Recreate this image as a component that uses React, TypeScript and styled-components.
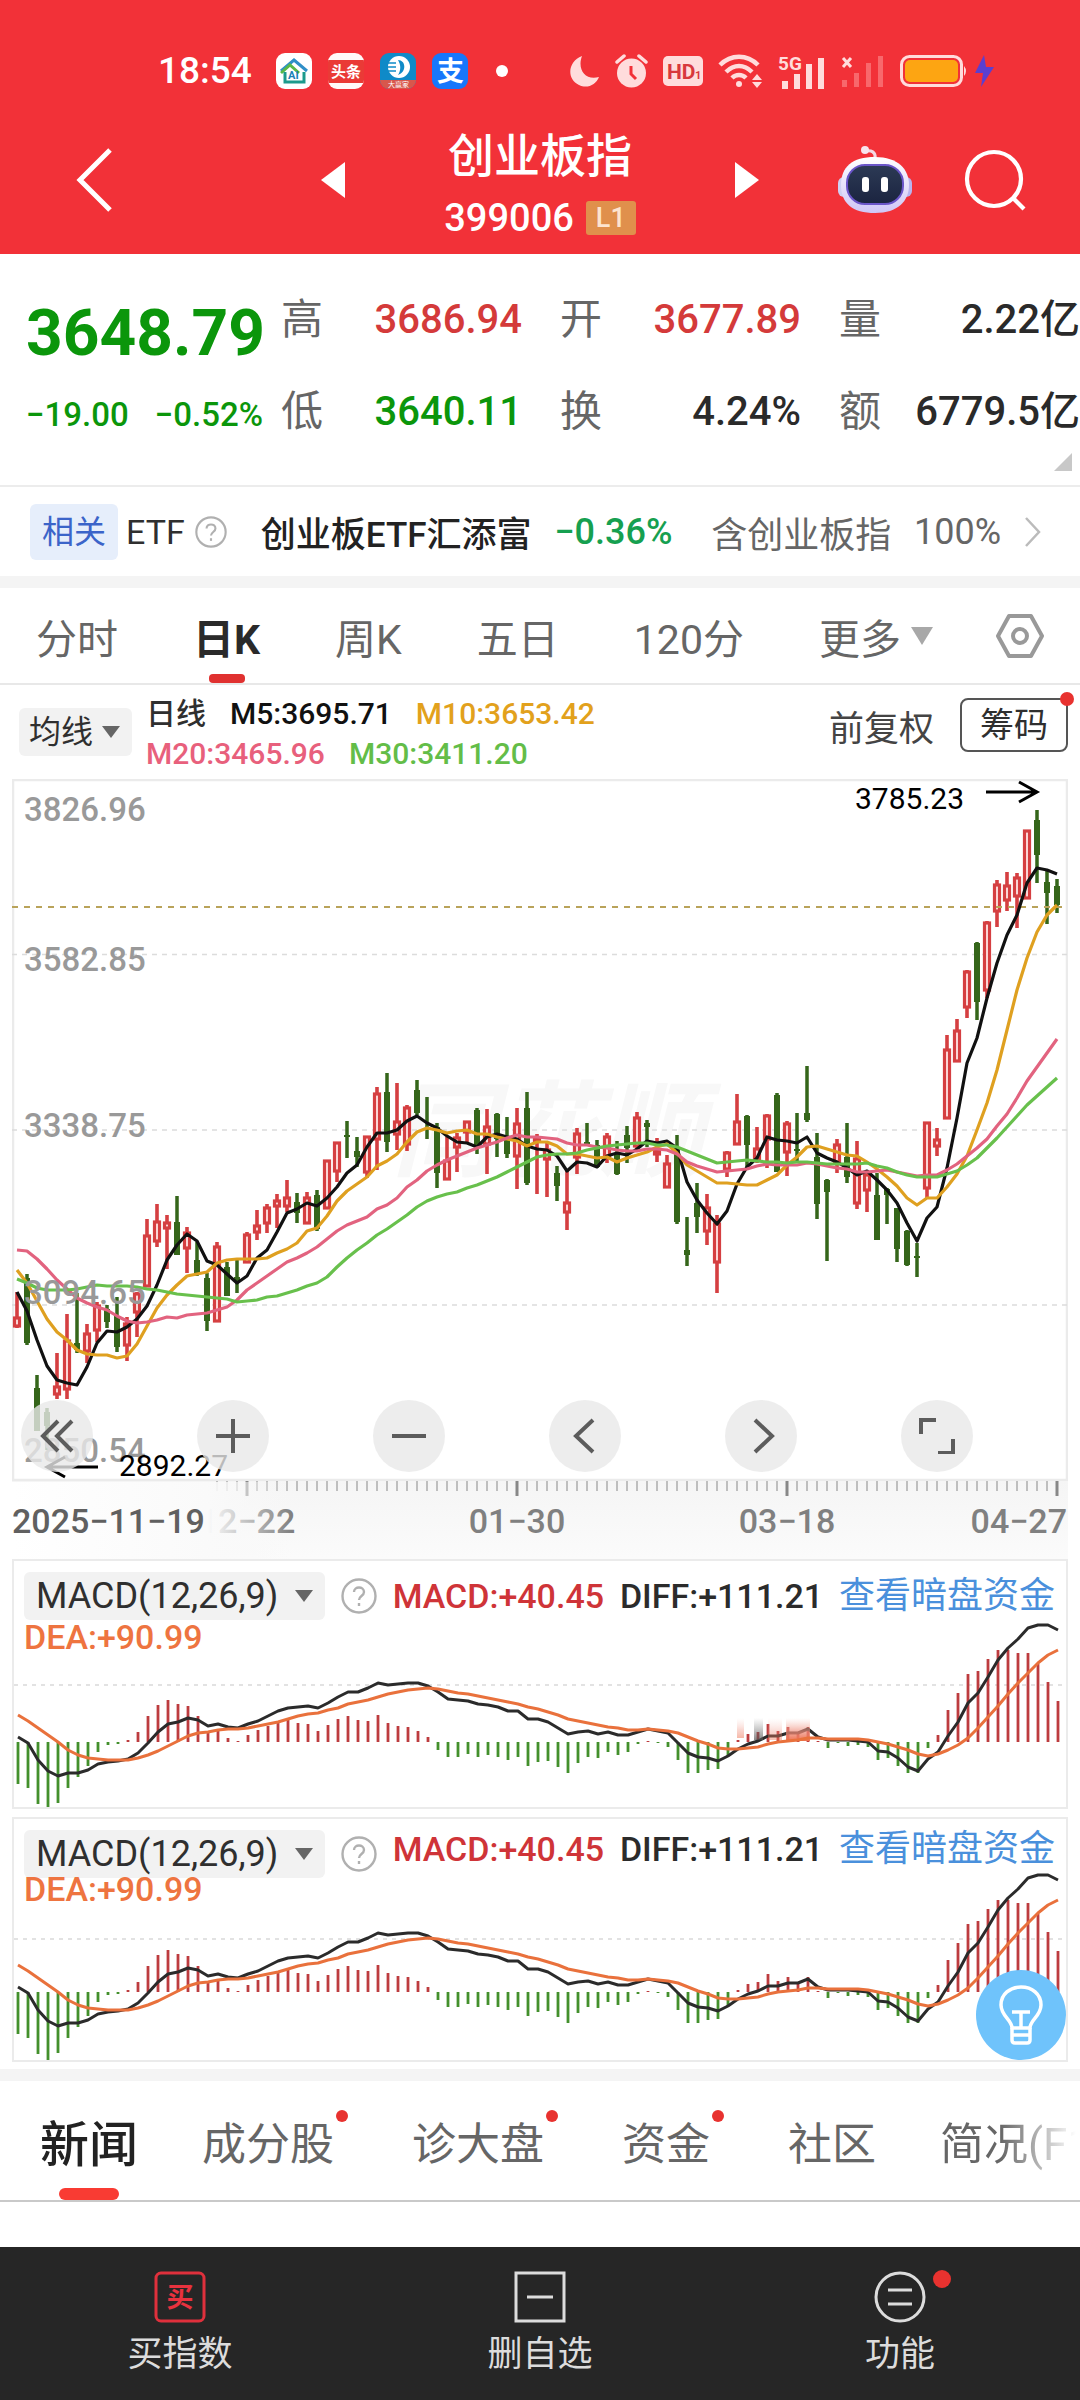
import React from "react";
import styled, { createGlobalStyle, css } from "styled-components";

const GlobalStyle = createGlobalStyle`
  *, *::before, *::after { box-sizing: border-box; }
  body { margin: 0; background: #fff; }
  body, button, select { font-family: Roboto, "Noto Sans CJK SC", sans-serif; }
  h1, dl, dd, dt, p { margin: 0; font-weight: inherit; }
  button, select { border: 0; padding: 0; background: none; color: inherit; font-size: inherit; }
  a { color: inherit; text-decoration: none; }
  svg { display: block; flex: none; }
`;

const red = "#d43a3a";
const green = "#0b960b";

/* ---------- top area ---------- */

const Page = styled.div`
  overflow-x: hidden;
  background: #fff;
  color: #2f2f2f;
`;

const TopArea = styled.header`
  background: #f23138;
  color: #fff;
`;

const StatusBar = styled.div`
  display: flex;
  align-items: center;
  justify-content: space-between;
  padding: 48px 86px 0 158px;
  height: 94px;
`;

const StatusGroup = styled.div<{ $gap: number }>`
  display: flex;
  align-items: center;
  gap: ${(p) => p.$gap}px;
`;

const Clock = styled.span`
  font-size: 37px;
  font-weight: 500;
  line-height: 46px;
  margin-right: 8px;
`;

const NavBar = styled.nav`
  display: grid;
  grid-template-columns: 1fr auto 1fr;
  align-items: center;
  height: 160px;
  padding: 12px 54px 0 76px;
`;

const IconButton = styled.button`
  display: flex;
  align-items: center;
  justify-content: center;
  cursor: pointer;
`;

const NavStart = styled.div`
  display: flex;
  margin-right: 22px;
`;

const NavCenter = styled.div`
  display: flex;
  align-items: center;
  justify-content: space-between;
  width: 438px;
  margin-left: -22px;
`;

const NavEnd = styled.div`
  display: flex;
  justify-content: flex-end;
  gap: 52px;
`;

const TitleBlock = styled.div`
  display: flex;
  flex-direction: column;
  align-items: center;
  gap: 12px;
  padding-top: 4px;
`;

const Title = styled.h1`
  font-size: 46px;
  line-height: 60px;
  font-weight: 500;
`;

const CodeLine = styled.div`
  display: flex;
  align-items: center;
  gap: 12px;
  font-size: 38px;
  font-weight: 500;
  line-height: 40px;
`;

const LevelTag = styled.span`
  padding: 0 10px;
  border-radius: 3px;
  background: #e0904c;
  color: #fde4cf;
  font-size: 27px;
  line-height: 34px;
`;

/* ---------- quote ---------- */

const Quote = styled.section`
  position: relative;
  display: grid;
  grid-template-columns: 255px 1fr;
  height: 231px;
  padding: 20px 0 0 26px;
`;

const PriceColumn = styled.div`
  color: ${green};
`;

const Price = styled.p`
  font-size: 64px;
  line-height: 92px;
  padding-top: 14px;
  font-weight: 700;
`;

const Change = styled.p`
  display: flex;
  gap: 26px;
  font-size: 33px;
  font-weight: 500;
  line-height: 70px;
  white-space: nowrap;
`;

const Stats = styled.dl`
  display: grid;
  grid-template-columns: repeat(3, 1fr);
  grid-template-rows: 92px 92px;
  column-gap: 38px;
`;

const Stat = styled.div`
  display: flex;
  justify-content: space-between;
  align-items: center;
  white-space: nowrap;
`;

const StatLabel = styled.dt`
  font-size: 42px;
  line-height: 60px;
  color: #666;
`;

const StatValue = styled.dd<{ $color: string }>`
  font-size: 40px;
  line-height: 60px;
  font-weight: 500;
  color: ${(p) => p.$color};
`;

const ExpandCorner = styled.svg`
  position: absolute;
  right: 8px;
  bottom: 14px;
`;

const EtfRow = styled.section`
  display: flex;
  align-items: center;
  height: 91px;
  padding: 0 38px 0 30px;
  border-top: 2px solid #ececec;
  font-size: 36px;
  white-space: nowrap;
`;

const EtfTag = styled.span`
  padding: 0 12px;
  margin-right: 8px;
  border-radius: 6px;
  background: #e6eefb;
  color: #3b64c9;
  font-size: 32px;
  line-height: 56px;
`;

const EtfWord = styled.span`
  margin-right: 10px;
  font-size: 34px;
`;

const EtfLink = styled.a`
  display: flex;
  flex: 1;
  align-items: center;
  justify-content: space-between;
  margin-left: 34px;
  color: #666;
`;

const EtfName = styled.span`
  color: #222;
  font-size: 35px;
  font-weight: 500;
`;

const EtfChange = styled.span`
  margin-right: 16px;
  color: #16a050;
  font-weight: 500;
`;

const Band = styled.div`
  height: 12px;
  background: #f4f4f4;
`;

/* ---------- period tabs ---------- */

const PeriodTabs = styled.nav`
  display: flex;
  justify-content: space-between;
  height: 97px;
  padding: 0 36px;
  border-bottom: 2px solid #e8e8e8;
`;

const PeriodTab = styled.button<{ $active?: boolean }>`
  position: relative;
  display: flex;
  align-items: center;
  gap: 10px;
  font-size: 41px;
  color: ${(p) => (p.$active ? "#2a2a2a" : "#666")};
  font-weight: ${(p) => (p.$active ? 700 : 400)};
  ${(p) => p.$active && css`
    &::after {
      content: "";
      position: absolute;
      left: 50%;
      bottom: 0;
      width: 36px;
      height: 9px;
      margin-left: -18px;
      border-radius: 4px;
      background: #e03130;
    }
  `}
`;

const SettingsButton = styled(IconButton)`
  margin-left: -12px;
`;

/* ---------- moving averages ---------- */

const AverageRow = styled.section`
  display: flex;
  align-items: center;
  height: 94px;
  padding: 0 12px 0 19px;
`;

const SelectBox = styled.label<{ $size: number }>`
  display: grid;
  align-items: center;
  border-radius: 6px;
  background: #f2f2f2;
  color: #2f2f2f;
  font-size: ${(p) => p.$size}px;
  > * { grid-area: 1 / 1; }
  > svg { justify-self: end; margin-right: 12px; pointer-events: none; }
`;

const Select = styled.select<{ $wide?: boolean }>`
  appearance: none;
  height: 48px;
  padding: ${(p) => (p.$wide ? "0 46px 0 12px" : "0 38px 0 10px")};
  line-height: 48px;
`;

const AverageLegend = styled.div`
  display: flex;
  flex-direction: column;
  flex: 1;
  margin-left: 14px;
  padding-top: 4px;
  font-size: 30px;
  font-weight: 500;
  line-height: 40px;
`;

const LegendLine = styled.div`
  display: flex;
  gap: 24px;
`;

const Tint = styled.span<{ $color: string }>`
  color: ${(p) => p.$color};
`;

const PlainButton = styled.button`
  margin-bottom: 14px;
  font-size: 35px;
  color: #444;
`;

const ChipButton = styled.button`
  position: relative;
  height: 54px;
  margin: 0 0 14px 26px;
  padding: 0 18px;
  border: 2px solid #555;
  border-radius: 8px;
  font-size: 34px;
  line-height: 48px;
`;

const Dot = styled.i<{ $size: number; $top: number; $right: number }>`
  position: absolute;
  top: ${(p) => p.$top}px;
  right: ${(p) => p.$right}px;
  width: ${(p) => p.$size}px;
  height: ${(p) => p.$size}px;
  border-radius: 50%;
  background: #e8322f;
`;

/* ---------- charts ---------- */

const Charts = styled.main`
  padding: 0 12px 7px;
`;

const KlineBox = styled.section`
  position: relative;
`;

const Drawing = styled.svg`
  width: 100%;
  height: auto;
`;

const ChartTools = styled.div`
  position: absolute;
  left: 9px;
  right: -9px;
  bottom: 87px;
  display: grid;
  grid-template-columns: repeat(6, 1fr);
`;

const ToolButton = styled(IconButton)`
  width: 72px;
  height: 72px;
  border-radius: 50%;
  background: rgba(232, 232, 232, 0.8);
`;

const MacdPanel = styled.section`
  position: relative;
  display: grid;
  border: 2px solid #ebebeb;
  > * { grid-area: 1 / 1; }
  & + & { margin-top: 8px; }
`;

const MacdHead = styled.div<{ $compact?: boolean }>`
  z-index: 1;
  align-self: start;
  padding: 10px 11px 0 10px;
  font-size: 35px;
  line-height: 40px;
  > div:first-child > :nth-child(n + 3) {
    margin-bottom: ${(p) => (p.$compact ? 10 : 0)}px;
  }
  > div:last-child { margin-top: ${(p) => (p.$compact ? -10 : -4)}px; }
`;

const MacdLine = styled.div`
  display: flex;
  align-items: center;
  justify-content: space-between;
  height: 50px;
  white-space: nowrap;
`;

const Reading = styled(Tint)`
  font-size: 34px;
  font-weight: 500;
`;

const DarkPoolLink = styled.a`
  color: #4a90dc;
  font-size: 36px;
`;

const TipButton = styled(IconButton)`
  position: absolute;
  z-index: 2;
  right: 0;
  bottom: 0;
  width: 90px;
  height: 90px;
  border-radius: 50%;
  background: #6fc3fb;
`;

/* ---------- lower tabs and bottom bar ---------- */

const NewsTabs = styled.nav`
  display: flex;
  gap: 64px;
  height: 121px;
  padding-left: 40px;
  border-bottom: 2px solid #c9c9c9;
  white-space: nowrap;
  overflow: hidden;
`;

const NewsTab = styled.button<{ $active?: boolean; $dot?: boolean; $fade?: boolean }>`
  position: relative;
  flex: none;
  font-size: ${(p) => (p.$active ? 49 : 44)}px;
  font-weight: ${(p) => (p.$active ? 500 : 400)};
  color: ${(p) => (p.$active ? "#222" : "#666")};
  padding-right: ${(p) => (p.$dot ? 14 : 0)}px;
  ${(p) => p.$fade && css`
    background: linear-gradient(90deg, #666 60px, #fff 136px);
    background-clip: text;
    color: transparent;
  `}
  ${(p) => p.$active && css`
    &::after {
      content: "";
      position: absolute;
      left: 50%;
      bottom: 0;
      width: 60px;
      height: 12px;
      margin-left: -30px;
      border-radius: 6px;
      background: #f93b33;
    }
  `}
`;

const BottomBar = styled.nav`
  display: grid;
  grid-template-columns: repeat(3, 1fr);
  margin-top: 45px;
  height: 154px;
  background: #262626;
  color: #dcdcdc;
`;

const BottomItem = styled.button`
  display: flex;
  flex-direction: column;
  align-items: center;
  padding-top: 24px;
  font-size: 35px;
  line-height: 44px;
  gap: 10px;
`;

const BottomIcon = styled.span`
  position: relative;
  display: block;
`;

/* ---------- data ---------- */

type Candle = [up: number, high: number, top: number, bottom: number, low: number];

const candles: Candle[] = [
  [1,1292,1317,1327,1328],[0,1274,1278,1343,1345],[0,1375,1388,1431,1431],[0,1408,1412,1426,1450],[1,1353,1386,1395,1399],
  [1,1314,1340,1390,1399],[0,1293,1343,1350,1353],[1,1324,1333,1352,1363],[1,1302,1305,1331,1342],[0,1305,1309,1322,1328],
  [0,1297,1316,1347,1352],[1,1317,1323,1346,1361],[1,1292,1293,1313,1337],[1,1219,1235,1287,1287],[1,1204,1221,1242,1247],
  [1,1215,1222,1229,1269],[0,1196,1222,1255,1255],[1,1227,1232,1249,1273],[0,1242,1260,1274,1276],[0,1273,1278,1321,1331],
  [1,1242,1246,1322,1322],[0,1262,1267,1296,1296],[0,1260,1277,1281,1293],[1,1232,1234,1263,1263],[1,1210,1225,1233,1240],
  [1,1204,1207,1224,1233],[1,1194,1200,1207,1228],[1,1180,1197,1207,1212],[0,1193,1202,1213,1223],[1,1192,1197,1224,1224],
  [0,1190,1195,1229,1231],[1,1160,1160,1209,1209],[1,1142,1142,1172,1182],[0,1121,1135,1137,1158],[0,1137,1151,1157,1167],
  [1,1136,1136,1173,1178],[1,1087,1093,1140,1170],[0,1073,1092,1142,1152],[1,1083,1121,1135,1150],[1,1105,1107,1145,1151],
  [0,1080,1090,1113,1115],[0,1097,1128,1130,1139],[0,1123,1127,1173,1188],[1,1137,1160,1180,1180],[1,1133,1137,1148,1172],
  [1,1121,1121,1133,1142],[0,1108,1110,1146,1154],[1,1109,1126,1145,1174],[0,1113,1114,1139,1157],[0,1117,1138,1154,1158],
  [1,1108,1123,1157,1189],[0,1092,1108,1183,1185],[1,1134,1137,1142,1194],[1,1143,1149,1160,1197],[0,1166,1173,1186,1201],
  [1,1171,1202,1213,1230],[1,1128,1133,1158,1174],[0,1123,1142,1144,1144],[0,1140,1145,1167,1168],[1,1133,1136,1157,1163],
  [0,1141,1153,1174,1175],[0,1126,1135,1148,1163],[1,1112,1117,1147,1152],[0,1120,1123,1127,1147],[1,1138,1150,1155,1162],
  [1,1155,1163,1188,1188],[0,1135,1147,1222,1224],[0,1217,1250,1255,1266],[0,1183,1203,1217,1233],[1,1194,1207,1232,1245],
  [1,1215,1223,1263,1293],[1,1151,1152,1170,1177],[1,1094,1121,1145,1145],[0,1115,1116,1145,1167],[1,1127,1148,1160,1163],
  [1,1114,1115,1140,1168],[0,1093,1095,1172,1172],[1,1121,1123,1153,1176],[0,1113,1149,1151,1163],[0,1066,1113,1120,1122],
  [0,1133,1157,1204,1219],[0,1179,1180,1192,1261],[1,1139,1144,1163,1173],[0,1123,1157,1177,1183],[1,1141,1158,1204,1209],
  [1,1170,1174,1191,1212],[0,1173,1195,1240,1240],[0,1188,1189,1195,1224],[0,1208,1208,1249,1262],[0,1230,1231,1265,1266],
  [0,1243,1256,1258,1277],[1,1122,1122,1189,1199],[1,1128,1139,1147,1156],[1,1035,1049,1119,1119],[1,1019,1030,1062,1062],
  [1,970,971,1008,1018],[0,942,943,1002,1020],[1,921,922,991,998],[1,880,884,912,927],[1,872,885,901,911],
  [1,873,877,897,928],[1,830,830,899,899],[0,810,820,855,883],[0,869,882,893,924],[0,879,886,905,913],
];

const ma5 = [
  1292,1311,1340,1366,1380,1383,1385,1367,1343,1331,1332,1327,1319,1306,1285,1260,1245,1234,1241,1261,1265,1274,1283,1276,1258,
  1250,1232,1213,1209,1203,1206,1198,1187,1173,1165,1147,1133,1133,1130,1121,1116,1123,1128,1136,1142,1143,1147,1137,1134,1137,
  1139,1146,1149,1150,1156,1171,1162,1163,1167,1156,1153,1155,1149,1141,1143,1141,1148,1182,1200,1213,1224,1211,1184,1167,1158,
  1137,1140,1141,1143,1137,1153,1158,1162,1168,1175,1171,1180,1190,1203,1223,1241,1218,1207,1168,1118,1063,1038,998,963,935,
  915,883,868,870,874,
];
const ma10 = [
  1270,1283,1301,1319,1332,1340,1350,1354,1355,1355,1358,1356,1344,1326,1308,1295,1285,1276,1274,1272,1263,1260,1259,1259,1259,
  1258,1253,1249,1243,1231,1228,1216,1201,1191,1184,1177,1166,1161,1154,1142,1132,1128,1130,1133,1131,1130,1134,1134,1137,1139,
  1141,1146,1142,1142,1146,1154,1154,1156,1158,1157,1162,1158,1155,1152,1147,1144,1153,1165,1171,1177,1183,1183,1184,1185,1185,
  1180,1175,1165,1157,1147,1146,1149,1152,1155,1156,1162,1169,1177,1186,1198,1205,1198,1198,1187,1174,1156,1130,1103,1070,1030,
  990,958,932,915,905,
];
const ma20 = [
  1250,1251,1259,1269,1280,1289,1298,1303,1307,1310,1316,1321,1323,1322,1320,1317,1318,1315,1314,1313,1310,1307,1300,1290,1283,
  1276,1269,1262,1258,1253,1247,1239,1231,1225,1221,1217,1209,1205,1198,1187,1180,1171,1165,1160,1156,1152,1148,1145,1142,1138,
  1135,1137,1137,1138,1139,1143,1145,1145,1147,1148,1150,1151,1151,1149,1149,1150,1154,1162,1166,1169,1172,1171,1170,1169,1166,
  1164,1165,1165,1165,1163,1164,1166,1168,1169,1172,1172,1171,1170,1172,1174,1176,1175,1175,1170,1164,1156,1148,1139,1126,1114,
  1098,1081,1067,1053,1039,
];
const ma30 = [
  1279,1283,1288,1290,1290,1290,1289,1287,1285,1286,1286,1286,1287,1289,1290,1292,1294,1295,1296,1297,1298,1299,1302,1301,1300,
  1297,1296,1293,1290,1286,1283,1277,1267,1258,1250,1243,1235,1229,1222,1215,1207,1201,1197,1194,1192,1188,1185,1181,1177,1172,
  1167,1162,1157,1155,1154,1154,1153,1150,1148,1146,1145,1144,1143,1143,1145,1145,1147,1151,1155,1159,1163,1162,1161,1160,1161,
  1162,1162,1163,1162,1162,1163,1164,1164,1164,1164,1163,1166,1168,1172,1175,1177,1177,1177,1174,1171,1165,1158,1148,1138,1127,
  1116,1105,1096,1087,1078,
];
const bars = [
  -42,-46,-62,-68,-61,-46,-35,-24,-10,-3,-2,2,10,26,37,42,38,36,26,9,11,4,1,7,12,16,19,22,19,18,11,17,23,26,22,21,27,19,16,15,11,5,
  -8,-15,-15,-12,-15,-13,-15,-18,-15,-24,-20,-19,-25,-31,-21,-15,-16,-10,-13,-10,-2,1,-1,-5,-18,-31,-31,-28,-27,-14,2,8,10,18,11,
  15,10,15,1,-6,-1,-4,-3,-5,-18,-16,-24,-31,-31,-6,7,32,49,68,71,83,92,92,89,89,78,60,41,
];
const diff = [
  5,-1,-18,-29,-34,-31,-31,-28,-22,-20,-19,-17,-11,-1,10,18,20,24,22,16,18,15,14,18,21,26,31,34,35,36,34,39,45,50,50,54,59,57,58,
  59,59,56,50,43,42,41,38,37,35,31,31,23,23,20,14,8,10,11,8,10,7,7,10,13,11,9,-1,-11,-15,-16,-19,-14,-7,-2,1,6,6,9,9,13,5,2,2,2,1,0,
  -9,-10,-16,-25,-29,-17,-10,6,20,39,49,65,82,94,103,114,117,117,112,
];
const dea = [
  27,21,14,7,0,-8,-13,-16,-17,-18,-18,-18,-16,-13,-9,-4,1,6,9,10,12,13,13,14,16,18,20,23,26,28,29,32,34,38,40,42,45,48,50,52,53,54,
  53,51,49,48,46,44,42,40,38,35,33,30,27,23,21,19,17,15,14,12,12,13,12,11,9,5,1,-2,-6,-7,-7,-6,-5,-2,0,1,2,4,4,3,3,3,3,2,0,-2,-5,-8,
  -12,-14,-12,-8,-3,4,14,25,36,48,59,69,79,87,92,
];

const STEP = 10;
const barX = (i: number) => 17 + STEP * i;
const line = (ys: number[]) => ys.map((y, i) => `${barX(i)},${y}`).join(" ");

const stats = [
  { label: "高", value: "3686.94", color: red },
  { label: "开", value: "3677.89", color: red },
  { label: "量", value: "2.22亿", color: "#2a2a2a" },
  { label: "低", value: "3640.11", color: green },
  { label: "换", value: "4.24%", color: "#2a2a2a" },
  { label: "额", value: "6779.5亿", color: "#2a2a2a" },
];

const priceMarks = [
  { text: "3826.96", y: 821 },
  { text: "3582.85", y: 971 },
  { text: "3338.75", y: 1137 },
  { text: "3094.65", y: 1304 },
  { text: "2850.54", y: 1462 },
];

/* ---------- icons ---------- */

const Triangle = ({ color, width, height }: { color: string; width: number; height: number }) => (
  <svg width={width} height={height} viewBox="0 0 10 10" preserveAspectRatio="none" aria-hidden>
    <path d="M0 0H10L5 10Z" fill={color} />
  </svg>
);

const Help = ({ size }: { size: number }) => (
  <svg width={size} height={size} viewBox="0 0 36 36" fill="none" stroke="#b0b0b0" strokeWidth="2.4" aria-hidden>
    <circle cx="18" cy="18" r="16.5" />
    <path d="M13 14c0-6 10-6 10 0 0 4-5 4-5 8" />
    <path d="M18 25v3" />
  </svg>
);

const AppBadge = ({ children, bg }: { children: React.ReactNode; bg: string }) => (
  <svg width="36" height="36" viewBox="0 0 36 36" aria-hidden>
    <defs><clipPath id={`app${bg.slice(1)}`}><rect width="36" height="36" rx="9" /></clipPath></defs>
    <g clipPath={`url(#app${bg.slice(1)})`}>
      <rect width="36" height="36" fill={bg} />
      {children}
    </g>
  </svg>
);

const StatusIcons = () => (
  <StatusGroup $gap={15}>
    <svg width="30" height="32" viewBox="0 0 30 32" fill="#ffdcdc"><path d="M12 1C-2 6-4 24 9 30c8 4 17 0 20-8C15 26 7 14 12 1Z" /></svg>
    <svg width="33" height="34" viewBox="0 0 33 34" fill="none">
      <circle cx="16.500" cy="19" r="14.500" fill="#ffdcdc" />
      <path d="M2 8 9 2M31 8l-7-6" stroke="#ffdcdc" strokeWidth="3.500" strokeLinecap="round" />
      <path d="M16 12v8l5 5" stroke="#f23138" strokeWidth="3" />
    </svg>
    <svg width="40" height="30" viewBox="0 0 40 30">
      <rect width="40" height="30" rx="5" fill="#ffdcdc" />
      <text x="4" y="23" fontSize="21" fontWeight="700" fill="#d8383c">HD</text>
      <text x="32" y="23" fontSize="11" fontWeight="700" fill="#d8383c">1</text>
    </svg>
    <svg width="45" height="34" viewBox="0 0 45 34" fill="none" stroke="#ffdcdc" strokeWidth="4.500">
      <path d="M2 11c11-11 27-11 38 0M8 18c8-8 18-8 26 0M14 24c4-4 10-4 14 0" />
      <circle cx="21" cy="30" r="3" fill="#ffdcdc" stroke="none" />
      <path d="m34 26 5-6 5 6ZM34 28l5 6 5-6Z" fill="#ffdcdc" stroke="none" />
    </svg>
    <svg width="48" height="38" viewBox="0 -4 48 38" fill="#ffdcdc">
      <text x="0" y="14" fontSize="19" fontWeight="700">5G</text>
      <path d="M4 25h6v8H4ZM16 18h6v15h-6ZM28 8h6v25h-6ZM40 2h6v31h-6Z" />
    </svg>
    <svg width="44" height="34" viewBox="0 0 44 34">
      <path d="m2 4 8 9m0-9-8 9" stroke="#ffdcdc" strokeWidth="3" />
      <path d="M1 26h5v7H1ZM13 19h5v14h-5ZM25 9h5v24h-5ZM37 2h5v31h-5Z" fill="#f8686c" />
    </svg>
    <svg width="94" height="34" viewBox="0 0 94 34">
      <rect x="1.500" y="2.500" width="60" height="29" rx="8" fill="none" stroke="#ffdcdc" strokeWidth="3" />
      <rect x="5" y="6" width="53" height="22" rx="5" fill="#fda512" />
      <path d="M64 12q4 5 0 10Z" fill="#ffdcdc" />
      <path d="M84 1 75 19h8l-2 14 13-20h-8Z" fill="#5b3fd0" />
    </svg>
  </StatusGroup>
);

const Robot = () => (
  <svg width="74" height="70" viewBox="0 0 74 70" aria-hidden>
    <defs>
      <linearGradient id="head" x1="0" y1="0" x2="0" y2="1"><stop offset="0" stopColor="#fff" /><stop offset="1" stopColor="#cfc6f6" /></linearGradient>
      <linearGradient id="visor" x1="0" y1="0" x2="0" y2="1"><stop offset="0" stopColor="#2c3a55" /><stop offset="1" stopColor="#1b2440" /></linearGradient>
    </defs>
    <path d="M37 13c1-6-4-8-9-7" fill="none" stroke="#f4d9e4" strokeWidth="3" />
    <circle cx="27" cy="5" r="4" fill="#f8e4ee" />
    <rect x="0" y="32" width="12" height="20" rx="6" fill="#cfd0f2" />
    <rect x="62" y="32" width="12" height="20" rx="6" fill="#b9b4ee" />
    <path d="M37 12C60 12 71 24 71 40S60 68 37 68 3 58 3 40 14 12 37 12Z" fill="url(#head)" />
    <rect x="9" y="20" width="56" height="39" rx="18" fill="url(#visor)" stroke="#6a55c8" strokeWidth="2" />
    <rect x="24" y="32" width="7" height="15" rx="3" fill="#fff" />
    <rect x="43" y="32" width="7" height="15" rx="3" fill="#fff" />
  </svg>
);

const tools = [
  { name: "首页", d: "M18 2 3 17l15 15M32 2 17 17l15 15" },
  { name: "放大", d: "M0 17h34M17 0v34" },
  { name: "缩小", d: "M0 17h34" },
  { name: "左移", d: "M25 1 8 17l17 16" },
  { name: "右移", d: "M11 1l17 16L11 33" },
  { name: "全屏", d: "M1 15V1h15M33 20v14H18" },
];

/* ---------- chart drawings ---------- */

const Kline = () => (
  <Drawing viewBox="12 779 1056 780" role="img" aria-label="日K线">
    <defs>
      <linearGradient id="axisFade" x1="0" x2="1"><stop offset="0" stopColor="#fff" /><stop offset="0.700" stopColor="#fafafa" /><stop offset="1" stopColor="#f8f8f8" stopOpacity="0" /></linearGradient>
      <linearGradient id="axisBg" x1="0" y1="0" x2="0" y2="1"><stop offset="0" stopColor="#f5f5f5" /><stop offset="1" stopColor="#fbfbfb" /></linearGradient>
    </defs>
    <text x="392" y="1168" fontSize="104" fontWeight="700" fontStyle="italic" fill="#f8f8f8">同花顺</text>
    <rect x="13" y="780" width="1054" height="700" fill="none" stroke="#ebebeb" strokeWidth="2.500" />
    <path d="M12 954.500H1068M12 1130H1068M12 1305H1068" stroke="#dcdcdc" strokeWidth="1.500" strokeDasharray="5 5" />
    {candles.map(([up, high, top, bottom, low], i) => {
      const x = barX(i);
      return up ? (
        <g key={i} stroke="#d53f41" fill="#ffe6e6">
          <path d={`M${x} ${high}V${top}M${x} ${bottom}V${low}`} strokeWidth="3.600" />
          <rect x={x - 2.5} y={top + 1} width="5" height={Math.max(bottom - top - 2, 2)} strokeWidth="3.200" />
        </g>
      ) : (
        <g key={i} fill="#35661a">
          <rect x={x - 1.75} y={high} width="3.500" height={low - high} />
          <rect x={x - 3} y={top} width="6" height={bottom - top} />
        </g>
      );
    })}
    <path d="M12 907H1068" stroke="#b9a35a" strokeWidth="2" strokeDasharray="6 6" />
    <g fill="none" strokeWidth="3.200" strokeLinejoin="round">
      <polyline points={line(ma5)} stroke="#111" />
      <polyline points={line(ma10)} stroke="#dfa020" />
      <polyline points={line(ma20)} stroke="#e2637f" />
      <polyline points={line(ma30)} stroke="#68c04c" />
    </g>
    <g fontSize="33" fontWeight="500" fill="#999">
      {priceMarks.map((m) => <text key={m.text} x="24" y={m.y}>{m.text}</text>)}
    </g>
    <g fontSize="30" fill="#000">
      <text x="855" y="809">3785.23</text>
      <text x="119" y="1476">2892.27</text>
    </g>
    <path d="M986 792h51m-18-10 18 10-18 10M98 1467H47m18-10-18 10 18 10" fill="none" stroke="#000" strokeWidth="3" />
    <rect x="12" y="1481" width="1056" height="78" fill="url(#axisBg)" />
    <g>
      {candles.map((_, i) => {
        if (i < 20) return null;
        const major = (i - 23) % 27 === 0;
        return <path key={i} d={`M${barX(i)} 1481v${major ? 15 : 10}`} strokeWidth={major ? 3 : 1.3} stroke={major ? "#888" : "#a0a0a0"} />;
      })}
    </g>
    <g fontSize="34" fontWeight="500" fill="#808080" textAnchor="middle">
      <text x="247" y="1533">12−22</text>
      <text x="517" y="1533">01−30</text>
      <text x="787" y="1533">03−18</text>
      <text x="1067" y="1533" textAnchor="end">04−27</text>
    </g>
    <rect x="12" y="1482" width="280" height="77" fill="url(#axisFade)" />
    <text x="12" y="1533" fontSize="34" fontWeight="500" fill="#606060">2025−11−19</text>
  </Drawing>
);

const MacdChart = ({ height, zero, grid, smear }: { height: number; zero: number; grid: number; smear?: boolean }) => {
  const points = (vs: number[]) => vs.map((v, i) => `${barX(i) - 13},${zero - v}`).join(" ");
  return (
    <Drawing viewBox={`0 0 1052 ${height}`} role="img" aria-label="MACD">
      <defs>
        <linearGradient id="smearRed" x1="0" y1="0" x2="0" y2="1"><stop offset="0" stopColor="#f6b8ac" stopOpacity="0" /><stop offset="0.600" stopColor="#ee8a78" stopOpacity="0.700" /><stop offset="1" stopColor="#ef7250" /></linearGradient>
        <linearGradient id="smearInk" x1="0" y1="0" x2="0" y2="1"><stop offset="0" stopColor="#777" stopOpacity="0" /><stop offset="1" stopColor="#555" /></linearGradient>
      </defs>
      <path d={`M0 ${grid}H1052`} stroke="#e2e2e2" strokeWidth="2" strokeDasharray="4 5" />
      {bars.map((v, i) => (
        <path key={i} d={`M${barX(i) - 13} ${zero}v${-v}`} stroke={v > 0 ? "#bd3c3f" : "#43902c"} strokeWidth="2.800" />
      ))}
      <polyline points={points(diff)} fill="none" stroke="#2b2b2b" strokeWidth="3" strokeLinejoin="round" />
      {smear && (
        <>
          <rect x="723" y={zero - 24} width="7" height="20" fill="url(#smearRed)" opacity="0.500" />
          <rect x="740" y={zero - 24} width="9" height="22" fill="url(#smearInk)" opacity="0.700" />
          <rect x="754" y={zero - 24} width="14" height="22" fill="url(#smearRed)" opacity="0.450" />
          <rect x="772" y={zero - 24} width="24" height="23" fill="url(#smearRed)" />
        </>
      )}
      <polyline points={points(dea)} fill="none" stroke="#e9713c" strokeWidth="3" strokeLinejoin="round" />
    </Drawing>
  );
};

const Macd = ({ compact, children, ...chart }: { compact?: boolean; children?: React.ReactNode; height: number; zero: number; grid: number; smear?: boolean }) => (
  <MacdPanel>
    <MacdHead $compact={compact}>
      <MacdLine>
        <SelectBox $size={36}>
          <Select $wide aria-label="指标"><option>MACD(12,26,9)</option></Select>
          <Triangle color="#666" width={18} height={12} />
        </SelectBox>
        <Help size={36} />
        <Reading $color="#cf3438">MACD:+40.45</Reading>
        <Reading $color="#2b2b2b">DIFF:+111.21</Reading>
        <DarkPoolLink href="#funds">查看暗盘资金</DarkPoolLink>
      </MacdLine>
      <div><Reading $color="#ee7440">DEA:+90.99</Reading></div>
    </MacdHead>
    <MacdChart {...chart} />
    {children}
  </MacdPanel>
);

/* ---------- page ---------- */

export default function App() {
  return (
    <Page>
      <GlobalStyle />
      <TopArea>
        <StatusBar>
          <StatusGroup $gap={16}>
            <Clock>18:54</Clock>
            <AppBadge bg="#ffffff">
              <path d="M5 18 18 7l13 11" fill="none" stroke="#2f8fc8" strokeWidth="3" />
              <path d="m5 20 9-8 9 8" fill="none" stroke="#58b848" strokeWidth="3" />
              <path d="M9 19v10h19V19" fill="none" stroke="#1d9a8c" strokeWidth="3" />
              <text x="12" y="26" fontSize="11" fontWeight="700" fill="#1b7fb8">AI</text>
            </AppBadge>
            <AppBadge bg="#fffafa">
              <rect y="7" width="36" height="23" fill="#ea3a36" />
              <text x="3" y="24" fontSize="15" fontWeight="700" fill="#fff">头条</text>
            </AppBadge>
            <AppBadge bg="#0f8ac8">
              <circle cx="19" cy="14" r="11" fill="#fff" />
              <path d="M18 7c8 0 9 12 0 15 3-5 3-10 0-15Z" fill="#0f8ac8" />
              <path d="M6 10h10M6 14h10M6 18h10" stroke="#0f8ac8" strokeWidth="1.500" />
              <rect y="27" width="36" height="9" fill="#d8574c" />
              <text x="8" y="34" fontSize="7" fill="#fff">大赢家</text>
            </AppBadge>
            <AppBadge bg="#1777fb">
              <text x="5" y="28" fontSize="27" fontWeight="700" fill="#fff">支</text>
            </AppBadge>
            <svg width="40" height="12" viewBox="0 0 40 12"><circle cx="18" cy="6" r="6" fill="#fff" /></svg>
          </StatusGroup>
          <StatusIcons />
        </StatusBar>
        <NavBar>
          <NavStart>
            <IconButton aria-label="返回">
              <svg width="38" height="66" viewBox="0 0 38 66"><path d="M34 3 4 33l30 30" fill="none" stroke="#fff" strokeWidth="5" /></svg>
            </IconButton>
          </NavStart>
          <NavCenter>
            <IconButton aria-label="上一个"><svg width="24" height="36" viewBox="0 0 24 36"><path d="M24 0v36L0 18Z" fill="#fff" /></svg></IconButton>
            <TitleBlock>
              <Title>创业板指</Title>
              <CodeLine>399006<LevelTag>L1</LevelTag></CodeLine>
            </TitleBlock>
            <IconButton aria-label="下一个"><svg width="24" height="36" viewBox="0 0 24 36"><path d="M0 0v36l24-18Z" fill="#fff" /></svg></IconButton>
          </NavCenter>
          <NavEnd>
            <IconButton aria-label="智能助手"><Robot /></IconButton>
            <IconButton aria-label="搜索">
              <svg width="62" height="62" viewBox="0 0 62 62" fill="none" stroke="#fff" strokeWidth="4.200">
                <circle cx="30" cy="30" r="27" /><path d="m49 49 11 11" />
              </svg>
            </IconButton>
          </NavEnd>
        </NavBar>
      </TopArea>

      <Quote>
        <PriceColumn>
          <Price>3648.79</Price>
          <Change><span>−19.00</span><span>−0.52%</span></Change>
        </PriceColumn>
        <Stats>
          {stats.map((s) => (
            <Stat key={s.label}>
              <StatLabel>{s.label}</StatLabel>
              <StatValue $color={s.color}>{s.value}</StatValue>
            </Stat>
          ))}
        </Stats>
        <ExpandCorner width="18" height="18" viewBox="0 0 18 18"><path d="M18 0v18H0Z" fill="#c8c8c8" /></ExpandCorner>
      </Quote>

      <EtfRow>
        <EtfTag>相关</EtfTag>
        <EtfWord>ETF</EtfWord>
        <Help size={32} />
        <EtfLink href="#etf">
          <EtfName>创业板ETF汇添富</EtfName>
          <EtfChange>−0.36%</EtfChange>
          <span>含创业板指</span>
          <span>100%</span>
          <svg width="18" height="32" viewBox="0 0 18 32"><path d="m2 2 13 14L2 30" fill="none" stroke="#bbb" strokeWidth="2.500" /></svg>
        </EtfLink>
      </EtfRow>
      <Band />

      <PeriodTabs>
        <PeriodTab>分时</PeriodTab>
        <PeriodTab $active>日K</PeriodTab>
        <PeriodTab>周K</PeriodTab>
        <PeriodTab>五日</PeriodTab>
        <PeriodTab>120分</PeriodTab>
        <PeriodTab>更多<Triangle color="#a8a8a8" width={22} height={18} /></PeriodTab>
        <SettingsButton aria-label="设置">
          <svg width="48" height="46" viewBox="0 0 48 46" fill="none" stroke="#999" strokeWidth="4" strokeLinejoin="round">
            <path d="M13 3h22l11 20-11 20H13L2 23Z" /><circle cx="24" cy="23" r="7" />
          </svg>
        </SettingsButton>
      </PeriodTabs>

      <AverageRow>
        <SelectBox $size={32}>
          <Select aria-label="均线"><option>均线</option></Select>
          <Triangle color="#666" width={18} height={12} />
        </SelectBox>
        <AverageLegend>
          <LegendLine>
            <span>日线</span>
            <Tint $color="#111">M5:3695.71</Tint>
            <Tint $color="#e2a11c">M10:3653.42</Tint>
          </LegendLine>
          <LegendLine>
            <Tint $color="#e8607c">M20:3465.96</Tint>
            <Tint $color="#63bd48">M30:3411.20</Tint>
          </LegendLine>
        </AverageLegend>
        <PlainButton>前复权</PlainButton>
        <ChipButton>筹码<Dot $size={14} $top={-8} $right={-8} /></ChipButton>
      </AverageRow>

      <Charts>
        <KlineBox>
          <Kline />
          <ChartTools>
            {tools.map((t) => (
              <ToolButton key={t.name} aria-label={t.name}>
                <svg width="36" height="36" viewBox="-1 -1 36 36"><path d={t.d} fill="none" stroke="#5c5c5c" strokeWidth="4" /></svg>
              </ToolButton>
            ))}
          </ChartTools>
        </KlineBox>
        <Macd height={246} zero={181} grid={124} smear />
        <Macd height={241} zero={173} grid={120} compact>
          <TipButton aria-label="提示">
            <svg width="46" height="60" viewBox="0 0 46 60" fill="none" stroke="#fff" strokeWidth="3.500" strokeLinejoin="round">
              <path d="M14 43c0-8-11-12-11-23C3 9 12 2 23 2s20 7 20 18c0 11-11 15-11 23Z" />
              <path d="M14 43v12c0 2 1 3 3 3h12c2 0 3-1 3-3V43M14 50h18M14 27h18M23 27v15" />
            </svg>
          </TipButton>
        </Macd>
      </Charts>
      <Band />

      <NewsTabs>
        <NewsTab $active>新闻</NewsTab>
        <NewsTab $dot>成分股<Dot $size={12} $top={29} $right={0} /></NewsTab>
        <NewsTab $dot>诊大盘<Dot $size={12} $top={29} $right={0} /></NewsTab>
        <NewsTab $dot>资金<Dot $size={12} $top={29} $right={0} /></NewsTab>
        <NewsTab>社区</NewsTab>
        <NewsTab $fade>简况(F10)</NewsTab>
      </NewsTabs>

      <BottomBar>
        <BottomItem>
          <BottomIcon>
            <svg width="52" height="52" viewBox="0 0 52 52">
              <rect x="2" y="2" width="48" height="48" rx="5" fill="none" stroke="#e0303c" strokeWidth="3" />
              <text x="26" y="36" fontSize="27" fontWeight="700" textAnchor="middle" fill="#e8323e">买</text>
            </svg>
          </BottomIcon>
          买指数
        </BottomItem>
        <BottomItem>
          <BottomIcon>
            <svg width="52" height="52" viewBox="0 0 52 52" fill="none" stroke="#dcdcdc" strokeWidth="3"><rect x="2" y="2" width="48" height="48" /><path d="M13 26h26" /></svg>
          </BottomIcon>
          删自选
        </BottomItem>
        <BottomItem>
          <BottomIcon>
            <svg width="52" height="52" viewBox="0 0 52 52" fill="none" stroke="#dcdcdc" strokeWidth="3"><circle cx="26" cy="26" r="24" /><path d="M14 19h24M14 33h24" /></svg>
            <Dot $size={18} $top={-1} $right={-25} />
          </BottomIcon>
          功能
        </BottomItem>
      </BottomBar>
    </Page>
  );
}
